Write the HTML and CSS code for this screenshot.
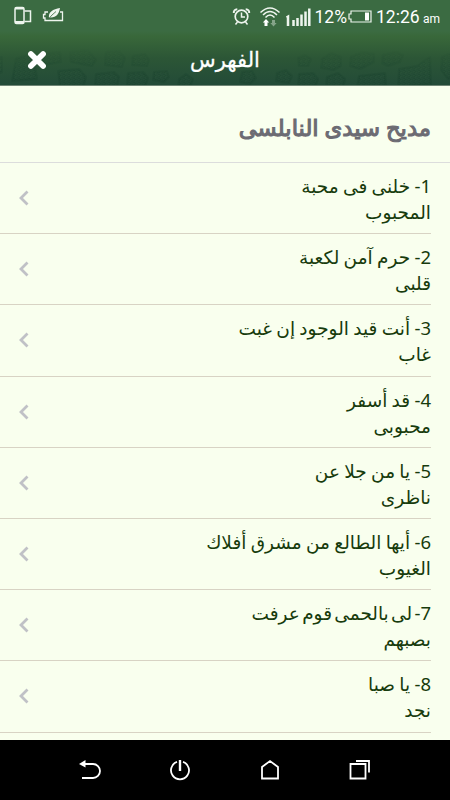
FILE: index.html
```html
<!DOCTYPE html>
<html lang="ar">
<head>
  <meta charset="UTF-8">
  <meta name="viewport" content="width=device-width, initial-scale=1.0">
  <title>الفهرس</title>
  <link rel="stylesheet" href="styles.css">
</head>
<body>
  <header class="top">
    <svg class="pattern" width="450" height="50" viewBox="0 0 450 50">
      <defs>
        <pattern id="grain" width="5" height="4" patternUnits="userSpaceOnUse">
          <path d="M0 1q1.500-2 2.500 0t2.500 0M1 3.500q1-2 2 0t2-1"/>
        </pattern>
      </defs>
      <g class="stones">
        <path d="M-4 24L2 22 2 37-4 40z"/>
        <path d="M16 24L33 18 37 44 12 46z"/>
        <path d="M43 19L60 17 61 27 44 30z"/>
        <path d="M70 17L88 15 96 25 92 31 71 27z"/>
        <path d="M106 17L119 16 125 23 122 32 105 30z"/>
        <path d="M133 21L145 19 149 25 147 31 132 30z"/>
        <path d="M58 36L79 34 86 42 83 53 60 52z"/>
        <path d="M96 39L114 37 119 42 117 52 95 50z"/>
        <path d="M128 38L143 37 148 43 145 52 127 50z"/>
        <path d="M154 37L167 36 169 42 164 47 153 45z"/>
        <path d="M179 44L186 39 193 44 190 52 178 52z"/>
        <path d="M242 37L252 36 256 43 250 49 240 47z"/>
        <path d="M277 38L286 35 292 41 289 48 276 46z"/>
        <path d="M298 23L305 20 311 24 308 31 299 31z"/>
        <path d="M299 39L313 38 318 44 315 53 298 51z"/>
        <path d="M322 24L331 18 341 22 341 31 334 35 321 33z"/>
        <path d="M327 42L338 38 345 44 343 53 326 53z"/>
        <path d="M351 22L363 17 374 19 374 27 360 34 350 31z"/>
        <path d="M359 41L385 38 386 52 357 53z"/>
        <path d="M383 20L396 17 403 20 400 27 388 31 382 28z"/>
        <path d="M399 34L417 31 430 22 431 49 398 52z"/>
        <path d="M442 22L454 17 454 42 448 44 441 35z"/>
      </g>
    </svg>
    <div class="status">
      <svg width="50" height="20" viewBox="0 0 50 20" fill="none" stroke="#eef5ee">
        <rect x="1" y="1.5" width="9" height="16" rx="1.5" stroke-width="1.5"/>
        <path d="M1 2.5h9M1 16h9" stroke-width="2"/>
        <path d="M10.5 5H16.500v10.500H10.500" stroke-width="1.500"/>
        <path d="M34 6H31v2.500h-1.500v3.500H31v2.500h17.500V6H46" stroke-width="1.300"/>
        <path d="M35 12C34 6 39 3 46 2 45 8 42 12 36 11.500z" fill="#eef5ee" stroke="none"/>
        <path d="M34 13.500q4-5 8-8" stroke="#3b6b42" stroke-width=".8"/>
      </svg>
      <div class="status-right">
        <svg width="79" height="22" viewBox="231 4 79 22" fill="none" stroke="#eef5ee">
          <circle cx="240.500" cy="15.500" r="6.300" stroke-width="1.700"/>
          <path d="M240.500 11.500v4.500h3.500M236.500 21l-2 2.500M244.500 21l2 2.500" stroke-width="1.500"/>
          <path d="M232.800 12q-.3-3.500 3.500-3.700M248.200 12q.3-3.500-3.500-3.700" stroke-width="2"/>
          <path d="M259.500 11.500q9.500-9 19 0M262 14q7-7 14 0M264.500 16.500q4.500-5 9 0" stroke-width="1.500"/>
          <path d="M265 18l3.200 3.500h-1.700v3.500h-3v-3.500h-1.700z" fill="#fff" stroke="none"/>
          <path d="M272.500 25.500l3.200-3.500H274v-3h-3v3h-1.700z" fill="#85a489" stroke="none"/>
          <path d="M285.500 16.500l1.500-.8V25M292.500 19v6M296.500 17v8M300.500 13.500V25M304.500 10.500V25M308.300 7.500V25" stroke-width="2.500"/>
        </svg>
        <span class="percent">12%</span>
        <svg width="24" height="13" viewBox="0 0 24 13">
          <path d="M3 1h20v11H3V9H1V4h2z" fill="none" stroke="#eef5ee" stroke-width="1.200"/>
          <path d="M17 2.500h4v8h-4z" fill="#fff"/>
        </svg>
        <span class="clock">12:26 <small>am</small></span>
      </div>
    </div>
    <div class="bar">
      <svg class="close" width="22" height="22" viewBox="0 0 22 22">
        <path d="M4.500 4.500L17.500 17.500M17.500 4.500L4.500 17.500"/>
      </svg>
      <h1>الفهرس</h1>
    </div>
  </header>

  <main dir="rtl">
    <h2>مديح سيدى النابلسى</h2>
    <ul class="list">
      <li><p>1- خلنى فى محبة<br>المحبوب</p><svg class="arrow" viewBox="0 0 10 16"><path d="M8.500 1.500L2 8l6.500 6.500"/></svg></li>
      <li><p>2- حرم آمن لكعبة<br>قلبى</p><svg class="arrow" viewBox="0 0 10 16"><path d="M8.500 1.500L2 8l6.500 6.500"/></svg></li>
      <li><p>3- أنت قيد الوجود إن غبت<br>غاب</p><svg class="arrow" viewBox="0 0 10 16"><path d="M8.500 1.500L2 8l6.500 6.500"/></svg></li>
      <li><p>4- قد أسفر<br>محبوبى</p><svg class="arrow" viewBox="0 0 10 16"><path d="M8.500 1.500L2 8l6.500 6.500"/></svg></li>
      <li><p>5- يا من جلا عن<br>ناظرى</p><svg class="arrow" viewBox="0 0 10 16"><path d="M8.500 1.500L2 8l6.500 6.500"/></svg></li>
      <li><p>6- أيها الطالع من مشرق أفلاك<br>الغيوب</p><svg class="arrow" viewBox="0 0 10 16"><path d="M8.500 1.500L2 8l6.500 6.500"/></svg></li>
      <li><p class="tight">7- لى بالحمى قوم عرفت<br>بصبهم</p><svg class="arrow" viewBox="0 0 10 16"><path d="M8.500 1.500L2 8l6.500 6.500"/></svg></li>
      <li><p>8- يا صبا<br>نجد</p><svg class="arrow" viewBox="0 0 10 16"><path d="M8.500 1.500L2 8l6.500 6.500"/></svg></li>
    </ul>
  </main>

  <nav class="keys">
    <svg viewBox="0 0 22 22"><path d="M5 5h9a7 7 0 0 1 0 14H3"/><path d="M0 5l6.500-4v7.500z" fill="#fff" stroke="none"/></svg>
    <svg viewBox="0 0 22 22"><path d="M8 2.800a9 9 0 1 0 6 0"/><path d="M11 1v11" stroke-width="2.400"/></svg>
    <svg viewBox="0 0 22 22"><path d="M3 8l8-6 8 6v11.500H3z"/></svg>
    <svg viewBox="0 0 22 22"><path d="M1.500 5h15v14.500h-15zM7 2h13v11.500"/></svg>
  </nav>
</body>
</html>
```
FILE: styles.css
```css
* {
  box-sizing: border-box;
}
body {
  margin: 0;
  height: 800px;
  display: flex;
  flex-direction: column;
  overflow: hidden;
  background: #f9ffee;
  font-family: "Noto Sans", "DejaVu Sans", sans-serif;
}
.top {
  position: relative;
  height: 86px;
  flex: none;
  color: #fff;
  background: linear-gradient(#3b6b42 0, #3b6b42 31px, #39683a 36px, #2c5636 58px, #234b38 85px);
  border-bottom: 1px solid #6f8575;
}
.pattern {
  position: absolute;
  left: 0;
  top: 35px;
  -webkit-mask-image: linear-gradient(transparent 12px, #000 44px);
  mask-image: linear-gradient(transparent 12px, #000 44px);
}
.stones path {
  fill: url(#grain);
  stroke: #183f2c;
  stroke-opacity: .25;
  stroke-width: 2;
  stroke-linejoin: round;
}
#grain path {
  fill: none;
  stroke: #183f2c;
  stroke-width: 1;
  stroke-opacity: .5;
}
.status,
.bar {
  position: relative;
  display: flex;
}
.status {
  height: 32px;
  padding: 6px 10px 0 14px;
  justify-content: space-between;
}
.status-right {
  display: flex;
  align-items: center;
  height: 20px;
  font: 17.500px Roboto, sans-serif;
}
.percent {
  margin: 1px 1px 0 4px;
}
.clock {
  margin: 1px 0 0 4px;
  word-spacing: -1px;
}
.clock small {
  font-size: 12px;
}
.bar {
  height: 53px;
  justify-content: center;
}
.close {
  position: absolute;
  left: 26px;
  top: 17px;
  stroke: #fff;
  stroke-width: 6;
  stroke-linecap: round;
}
.close path {
  transform: scale(.94);
  transform-origin: center;
}
h1 {
  margin: 9px 0 0;
  font-size: 21px;
  font-weight: normal;
  line-height: 36px;
  -webkit-text-stroke: .3px #fff;
}
main {
  flex: 1;
  min-height: 0;
  overflow: hidden;
}
h2 {
  margin: 0;
  height: 77px;
  padding: 24px 19px 0;
  border-bottom: 1px solid #dcdddc;
  color: #6c6b73;
  font-size: 22.700px;
  font-weight: normal;
  line-height: 36px;
  -webkit-text-stroke: 1.100px #6c6b73;
}
.list {
  margin: 0;
  padding: 0 19px 0 0;
  list-style: none;
}
.list li {
  display: flex;
  align-items: center;
  justify-content: space-between;
  height: 71.200px;
  padding-left: 19px;
  border-bottom: 1px solid #d8d3c4;
}
.list p {
  margin: 2px 0 0;
  color: #173b0c;
  font-size: 18.500px;
  line-height: 26px;
  word-spacing: -.5px;
}
.list .tight {
  word-spacing: -2.500px;
}
.arrow {
  width: 10px;
  height: 16px;
  fill: none;
  stroke: #c0c1c6;
  stroke-width: 2.800;
}
.keys {
  height: 60px;
  flex: none;
  display: flex;
  justify-content: center;
  align-items: center;
  gap: 68px;
  background: #000;
}
.keys svg {
  width: 22px;
  height: 22px;
  fill: none;
  stroke: #fff;
  stroke-width: 1.800;
}
```
